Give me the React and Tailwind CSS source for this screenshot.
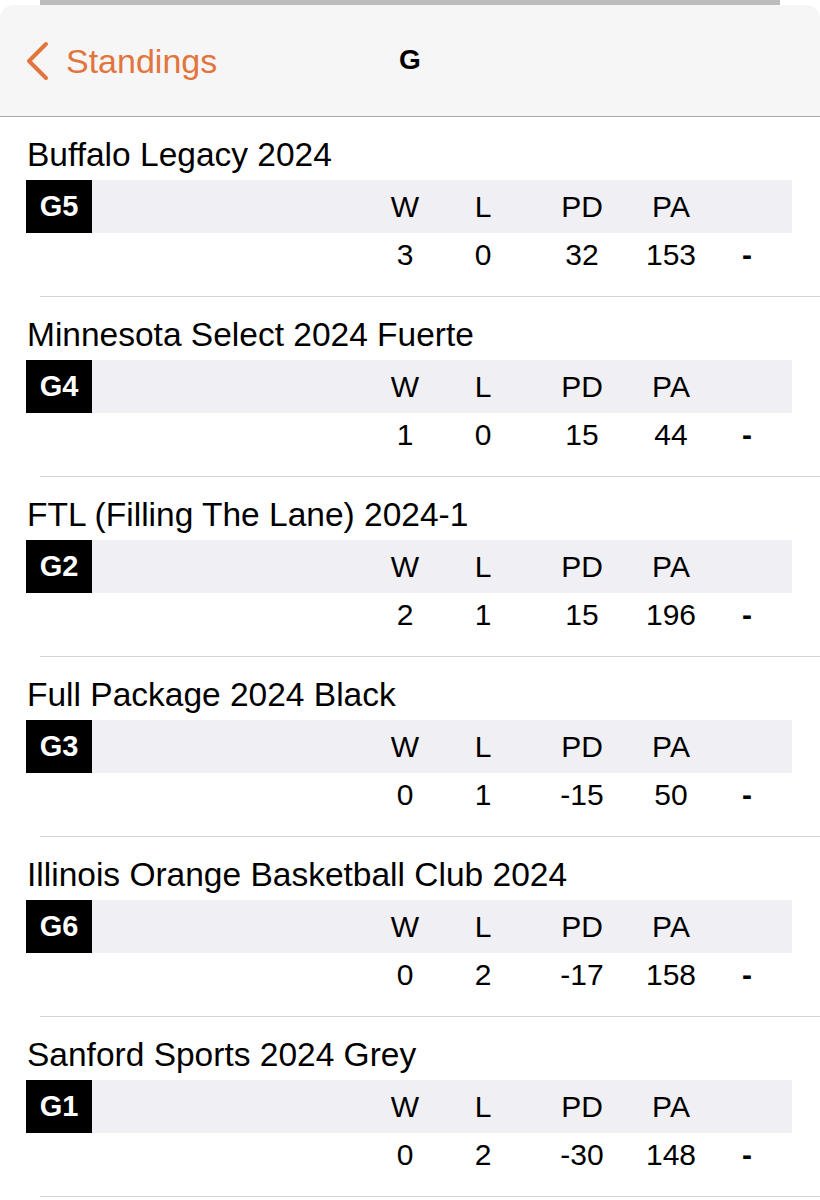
const teams = [
  { name: "Buffalo Legacy 2024", seed: "G5", w: 3, l: 0, pd: 32, pa: 153 },
  { name: "Minnesota Select 2024 Fuerte", seed: "G4", w: 1, l: 0, pd: 15, pa: 44 },
  { name: "FTL (Filling The Lane) 2024-1", seed: "G2", w: 2, l: 1, pd: 15, pa: 196 },
  { name: "Full Package 2024 Black", seed: "G3", w: 0, l: 1, pd: -15, pa: 50 },
  { name: "Illinois Orange Basketball Club 2024", seed: "G6", w: 0, l: 2, pd: -17, pa: 158 },
  { name: "Sanford Sports 2024 Grey", seed: "G1", w: 0, l: 2, pd: -30, pa: 148 },
];

function StatCols({ w, l, pd, pa, last }) {
  return (
    <>
      <div className="flex-1" />
      <div className="w-[74px] text-center">{w}</div>
      <div className="w-[82px] text-center">{l}</div>
      <div className="w-[116px] text-center">{pd}</div>
      <div className="w-[62px] text-center">{pa}</div>
      <div className="w-[90px] text-center font-bold">{last}</div>
    </>
  );
}

function TeamRow({ team }) {
  return (
    <div>
      <div className="h-[63px] pt-[21px] pl-[27px] text-[33.5px] leading-[34px] text-black whitespace-nowrap">
        {team.name}
      </div>
      <div className="ml-[26px] w-[766px] h-[53px] flex items-center bg-[#efeff4] text-[30px] text-black">
        <div className="w-[66px] h-full bg-black text-white font-bold text-[29px] flex items-center justify-center">
          {team.seed}
        </div>
        <StatCols w="W" l="L" pd="PD" pa="PA" last="" />
      </div>
      <div className="ml-[26px] w-[766px] h-[63px] pt-[6px] flex items-start text-[30px] leading-[32px] text-black">
        <div className="w-[66px]" />
        <StatCols w={team.w} l={team.l} pd={team.pd} pa={team.pa} last="-" />
      </div>
      <div className="ml-[40px] h-px bg-[#d4d4d8]" />
    </div>
  );
}

export default function App() {
  return (
    <div className="w-[820px] h-[1200px] bg-white overflow-hidden font-['Liberation_Sans',Arial,sans-serif]">
      <div className="h-[5px] mx-[40px] bg-[#bdbdbd]" />
      <div className="h-[112px] bg-[#f6f6f6] rounded-t-[14px] border-b border-[#a9a9a9] flex items-center relative">
        <div className="flex items-center pl-[25px] text-[#e2743e]">
          <svg width="26" height="40" viewBox="0 0 26 40" fill="none">
            <path d="M21 3 L4 20 L21 37" stroke="currentColor" strokeWidth="4" strokeLinecap="round" strokeLinejoin="round" />
          </svg>
          <span className="ml-[15px] text-[34px] leading-none">Standings</span>
        </div>
        <div className="absolute left-0 right-0 text-center pointer-events-none">
          <span className="text-[28px] leading-none font-bold text-black">G</span>
        </div>
      </div>
      {teams.map((t) => (
        <TeamRow key={t.seed} team={t} />
      ))}
    </div>
  );
}
